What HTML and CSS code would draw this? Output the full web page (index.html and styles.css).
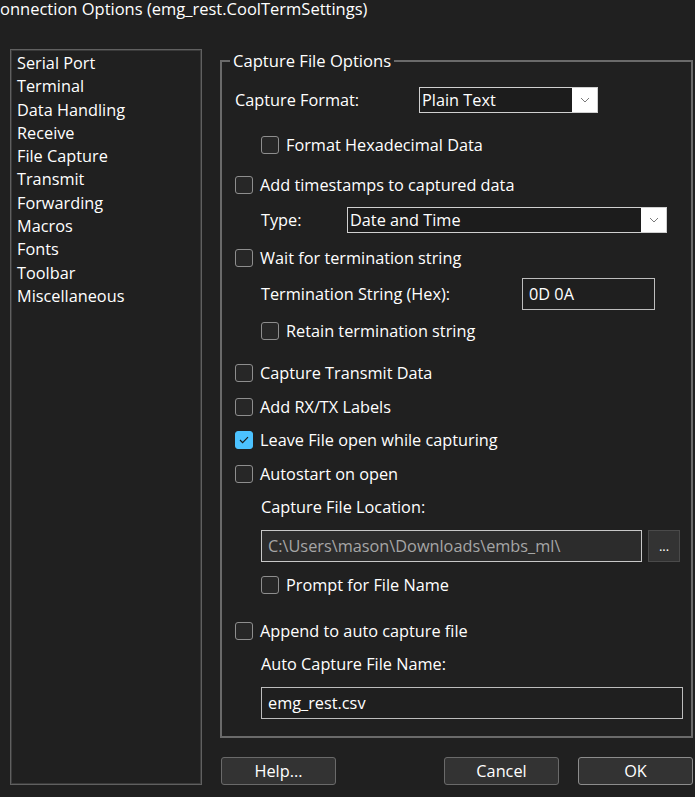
FILE: index.html
```html
<!DOCTYPE html>
<html lang="en">
<head>
  <meta charset="UTF-8" />
  <title>Connection Options</title>
  <link rel="stylesheet" href="styles.css">
</head>
<body>
  <div class="title">onnection Options (emg_rest.CoolTermSettings)</div>

  <div class="main">
    <ul class="nav-list">
      <li>Serial Port</li>
      <li>Terminal</li>
      <li>Data Handling</li>
      <li>Receive</li>
      <li>File Capture</li>
      <li>Transmit</li>
      <li>Forwarding</li>
      <li>Macros</li>
      <li>Fonts</li>
      <li>Toolbar</li>
      <li>Miscellaneous</li>
    </ul>

    <div class="pane">
      <fieldset class="group">
        <legend>Capture File Options</legend>

        <div class="row field-row">
          <span class="label format-label">Capture Format:</span>
          <div class="select format-select">
            <span class="select-value">Plain Text</span>
            <span class="select-arrow"><svg width="10" height="6" viewBox="0 0 10 6"><path d="M1 1l4 4 4-4" fill="none" stroke="#7a7a7a" stroke-width="1"/></svg></span>
          </div>
        </div>

        <label class="row check-row indent mt22"><span class="box"></span>Format Hexadecimal Data</label>
        <label class="row check-row mt20"><span class="box"></span>Add timestamps to captured data</label>

        <div class="row field-row indent mt12">
          <span class="label type-label">Type:</span>
          <div class="select type-select">
            <span class="select-value">Date and Time</span>
            <span class="select-arrow"><svg width="10" height="6" viewBox="0 0 10 6"><path d="M1 1l4 4 4-4" fill="none" stroke="#7a7a7a" stroke-width="1"/></svg></span>
          </div>
        </div>

        <label class="row check-row mt15"><span class="box"></span>Wait for termination string</label>

        <div class="row input-row indent mt10">
          <span class="label term-label">Termination String (Hex):</span>
          <div class="text-input term-input">0D 0A</div>
        </div>

        <label class="row check-row indent mt11"><span class="box"></span>Retain termination string</label>
        <label class="row check-row mt22"><span class="box"></span>Capture Transmit Data</label>
        <label class="row check-row mt14"><span class="box"></span>Add RX/TX Labels</label>
        <label class="row check-row mt13"><span class="box checked"><svg width="10" height="8" viewBox="0 0 10 8"><path d="M1 4l2.6 2.6L9 1.2" fill="none" stroke="#1a1a1a" stroke-width="1.2"/></svg></span>Leave File open while capturing</label>
        <label class="row check-row mt14"><span class="box"></span>Autostart on open</label>

        <div class="row check-row indent mt13">Capture File Location:</div>

        <div class="row input-row indent mt13">
          <div class="text-input path-input">C:\Users\mason\Downloads\embs_ml\</div>
          <div class="browse-btn">...</div>
        </div>

        <label class="row check-row indent mt13"><span class="box"></span>Prompt for File Name</label>
        <label class="row check-row mt26"><span class="box"></span>Append to auto capture file</label>

        <div class="row check-row indent mt13">Auto Capture File Name:</div>

        <div class="row input-row indent mt13">
          <div class="text-input name-input">emg_rest.csv</div>
        </div>
      </fieldset>

      <div class="buttons">
        <button class="btn">Help...</button>
        <div class="spacer"></div>
        <button class="btn">Cancel</button>
        <button class="btn btn-default">OK</button>
      </div>
    </div>
  </div>
</body>
</html>
```

FILE: styles.css
```css
body {
  margin: 0;
  background: #202020;
  color: #ffffff;
  font-family: 'Open Sans', 'Noto Sans', sans-serif;
  font-size: 16.3px;
  width: 695px;
  height: 797px;
  overflow: hidden;
}

.title {
  height: 18px;
  line-height: 18px;
  font-size: 16.5px;
  white-space: nowrap;
}

.main {
  display: flex;
  margin-top: 31px;
  padding-left: 10px;
}

/* Left category list */
.nav-list {
  list-style: none;
  margin: 0;
  padding: 2px 0 0 6px;
  width: 192px;
  height: 736px;
  box-sizing: border-box;
  border: 1px solid #606060;
  box-shadow: inset 0 0 0 1px #3a3a3a;
}

.nav-list li {
  height: 23.3px;
  line-height: 23.3px;
  white-space: nowrap;
}

/* Right pane */
.pane {
  margin-left: 18px;
  width: 473px;
  display: flex;
  flex-direction: column;
}

.group {
  margin: 2px 0 0 0;
  padding: 16px 0 0 13px;
  height: 687px;
  box-sizing: border-box;
  border: 2px solid #6a6a6a;
  min-width: 0;
}

.group legend {
  padding: 0 3px;
  margin-left: -5px;
  line-height: 20px;
  font-size: 16.6px;
}

.row {
  display: flex;
  align-items: center;
  white-space: nowrap;
}

.indent {
  margin-left: 26px;
}

.mt10 { margin-top: 10px; }
.mt11 { margin-top: 11px; }
.mt12 { margin-top: 12px; }
.mt13 { margin-top: 13px; }
.mt14 { margin-top: 14px; }
.mt15 { margin-top: 15px; }
.mt20 { margin-top: 20px; }
.mt22 { margin-top: 22px; }
.mt26 { margin-top: 26px; }

.check-row {
  height: 20px;
}

.field-row {
  height: 26px;
}

.input-row {
  height: 32px;
}

.box {
  width: 18px;
  height: 18px;
  box-sizing: border-box;
  border: 1px solid #8e8e8e;
  border-radius: 3px;
  background: #272727;
  margin-right: 7px;
  display: flex;
  align-items: center;
  justify-content: center;
  flex-shrink: 0;
}

.box.checked {
  background: #4cc2ff;
  border-color: #4cc2ff;
}

.label {
  flex-shrink: 0;
}

.format-label { width: 184px; }
.type-label { width: 86px; }
.term-label { width: 261px; }

/* Dropdowns */
.select {
  display: flex;
  height: 26px;
  box-sizing: border-box;
  border: 1px solid #d0d0d0;
  background: #1c1c1c;
}

.format-select { width: 179px; }
.type-select { width: 320px; }

.select-value {
  flex: 1;
  padding-left: 2px;
  line-height: 24px;
}

.select-arrow {
  width: 25px;
  background: #ffffff;
  display: flex;
  align-items: center;
  justify-content: center;
}

/* Text inputs */
.text-input {
  height: 32px;
  box-sizing: border-box;
  border: 1px solid #bdbdbd;
  background: #1f1f1f;
  padding-left: 6px;
  line-height: 30px;
}

.term-input { width: 133px; padding-left: 6px; }
.name-input { width: 422px; }

.path-input {
  width: 381px;
  background: #2c2c2c;
  color: #a6a6a6;
  border-color: #c8c8c8;
}

.browse-btn {
  margin-left: 6px;
  width: 32px;
  height: 32px;
  box-sizing: border-box;
  background: #333333;
  border: 1px solid #4a4a4a;
  text-align: center;
  line-height: 30px;
  font-size: 13px;
}

/* Bottom buttons */
.buttons {
  display: flex;
  margin-top: 19px;
  margin-left: 1px;
}

.spacer {
  flex: 1;
}

.btn {
  width: 115px;
  height: 28px;
  background: #333333;
  color: #ffffff;
  border: 1px solid #6a6a6a;
  border-radius: 3px;
  font-family: inherit;
  font-size: 16.3px;
  padding: 0;
}

.btn-default {
  margin-left: 19px;
  border-color: #8c8c8c;
}
```
